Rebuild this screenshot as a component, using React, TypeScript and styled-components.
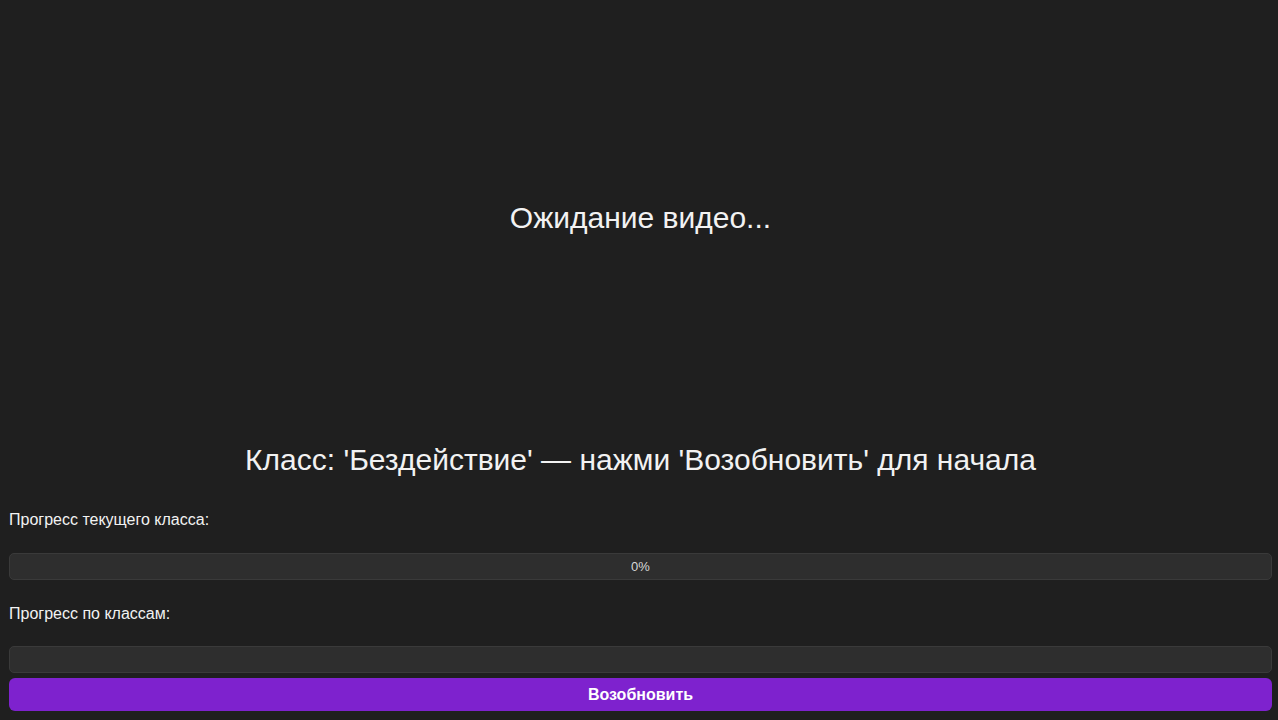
import React, { useState } from "react"
import styled, { createGlobalStyle } from "styled-components"

const GlobalStyle = createGlobalStyle`
    html, body {
        margin: 0;
        padding: 0;
        background-color: #1f1f1f;
        color: #f2f2f2;
        font-family: "Liberation Sans", Arial, sans-serif;
    }
`
const Page = styled.div`
    height: 720px;
    padding: 0 6px 0 9px;
    display: flex;
    flex-direction: column;
    box-sizing: border-box;
`
const VideoArea = styled.div`
    height: 436px;
    display: flex;
    align-items: center;
    justify-content: center;
    font-size: 30px;
`
const Status = styled.h2`
    margin: 0;
    height: 48px;
    line-height: 48px;
    text-align: center;
    font-size: 30px;
    font-weight: normal;
`
const Label = styled.div<{ $top: number }>`
    margin-top: ${(p) => p.$top}px;
    font-size: 16px;
    line-height: 20px;
`
const Bar = styled.div<{ $top: number }>`
    margin-top: ${(p) => p.$top}px;
    height: 27px;
    box-sizing: border-box;
    border: 1px solid #3a3a3a;
    border-radius: 5px;
    background-color: #2e2e2e;
    position: relative;
    overflow: hidden;
    display: flex;
    align-items: center;
    justify-content: center;
    font-size: 13px;
    color: #d8d8d8;
`
const Fill = styled.div`
    position: absolute;
    left: 0;
    top: 0;
    bottom: 0;
    background-color: #7e22ce;
`
const BarText = styled.span`
    position: relative;
`
const Button = styled.button`
    margin-top: 5px;
    height: 33px;
    border: none;
    border-radius: 6px;
    background-color: #7e22ce;
    color: #ffffff;
    font-family: "Liberation Sans", Arial, sans-serif;
    font-size: 16px;
    font-weight: bold;
    cursor: pointer;
`

const App = () => {
    const [current] = useState(0)
    const [classes] = useState(0)
    return (
        <Page>
            <GlobalStyle />
            <VideoArea>Ожидание видео...</VideoArea>
            <Status>Класс: 'Бездействие' — нажми 'Возобновить' для начала</Status>
            <Label $top={26}>Прогресс текущего класса:</Label>
            <Bar $top={23}>
                <Fill style={{ width: `${current}%` }} />
                <BarText>{current}%</BarText>
            </Bar>
            <Label $top={24}>Прогресс по классам:</Label>
            <Bar $top={22}>
                <Fill style={{ width: `${classes}%` }} />
            </Bar>
            <Button>Возобновить</Button>
        </Page>
    )
}
export default App
